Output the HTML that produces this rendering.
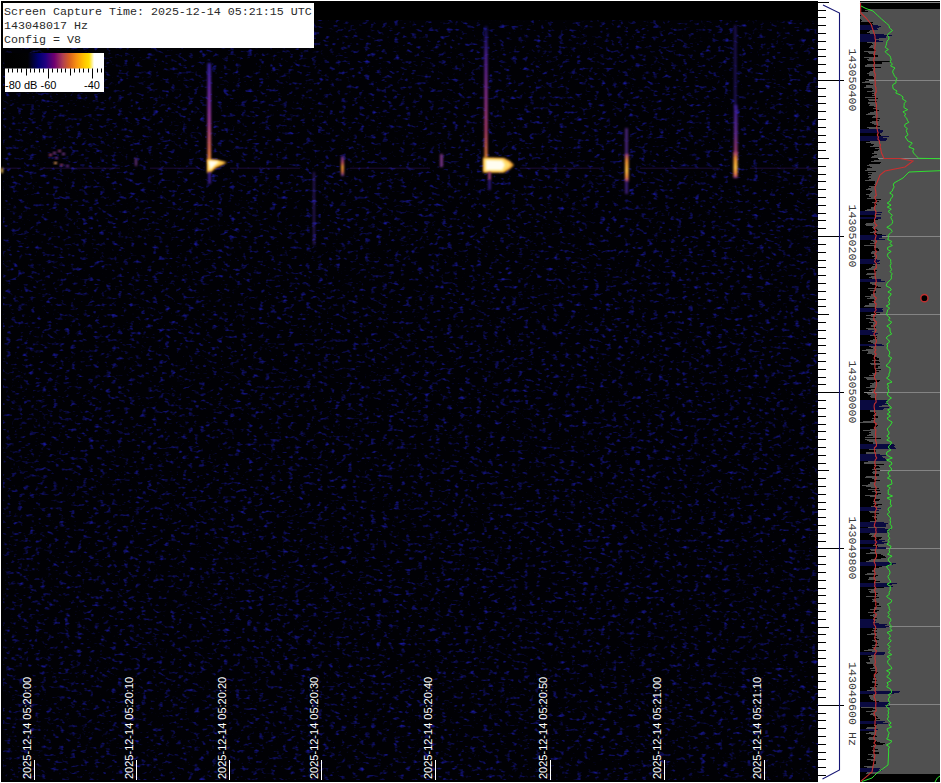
<!DOCTYPE html>
<html><head><meta charset="utf-8"><title>Spectrogram</title>
<style>html,body{margin:0;padding:0;background:#fff;width:941px;height:783px;overflow:hidden}svg{display:block}text{white-space:pre}</style>
</head><body><svg width="941" height="783" viewBox="0 0 941 783">
<defs>
 <filter id="nz" x="3" y="20" width="815" height="760" filterUnits="userSpaceOnUse" color-interpolation-filters="sRGB">
  <feTurbulence type="fractalNoise" baseFrequency="0.17 0.28" numOctaves="2" seed="3" result="t"/>
  <feColorMatrix in="t" type="matrix" values="0 0 0 0 0.1  0 0 0 0 0.1  0 0 0 0 0.66  2.8 0 0 0 -1.62"/>
 </filter>
 <filter id="bl" x="-3" y="-0.5" width="7" height="2" color-interpolation-filters="sRGB"><feGaussianBlur stdDeviation="0.9"/></filter>
 <filter id="bl2" x="-1" y="-1" width="3" height="3" color-interpolation-filters="sRGB"><feGaussianBlur stdDeviation="1.2"/></filter>
 <linearGradient id="cb" x1="0" x2="1" y1="0" y2="0">
  <stop offset="0" stop-color="#000"/>
  <stop offset="0.23" stop-color="#020204"/>
  <stop offset="0.34" stop-color="#000070"/>
  <stop offset="0.41" stop-color="#200080"/>
  <stop offset="0.5" stop-color="#700070"/>
  <stop offset="0.585" stop-color="#b04050"/>
  <stop offset="0.65" stop-color="#d86020"/>
  <stop offset="0.72" stop-color="#f89010"/>
  <stop offset="0.79" stop-color="#ffc000"/>
  <stop offset="0.85" stop-color="#ffe000"/>
  <stop offset="0.9" stop-color="#fff"/>
  <stop offset="1" stop-color="#fff"/>
 </linearGradient>
 <linearGradient id="m1" x1="0" x2="0" y1="0" y2="1">
  <stop offset="0" stop-color="#3020a0"/>
  <stop offset="0.3" stop-color="#6a28a0"/>
  <stop offset="0.6" stop-color="#9a3890"/>
  <stop offset="0.85" stop-color="#d06050"/>
  <stop offset="1" stop-color="#f09030"/>
 </linearGradient>
 <linearGradient id="m2" x1="0" x2="0" y1="0" y2="1">
  <stop offset="0" stop-color="#201890" stop-opacity="0.5"/>
  <stop offset="0.2" stop-color="#4a2098"/>
  <stop offset="0.5" stop-color="#8a3098"/>
  <stop offset="0.8" stop-color="#b84070"/>
  <stop offset="0.95" stop-color="#e07040"/>
  <stop offset="1" stop-color="#f09030"/>
 </linearGradient>
 <linearGradient id="m3" x1="0" x2="0" y1="0" y2="1">
  <stop offset="0" stop-color="#5028a0"/>
  <stop offset="0.35" stop-color="#c05060"/>
  <stop offset="0.55" stop-color="#f0a030"/>
  <stop offset="0.8" stop-color="#e07040"/>
  <stop offset="1" stop-color="#5028a0"/>
 </linearGradient>
 <linearGradient id="m5" x1="0" x2="0" y1="0" y2="1">
  <stop offset="0" stop-color="#a04080"/>
  <stop offset="0.25" stop-color="#f09030"/>
  <stop offset="0.6" stop-color="#ffc040"/>
  <stop offset="0.85" stop-color="#f08040"/>
  <stop offset="1" stop-color="#8030a0"/>
 </linearGradient>
 <linearGradient id="m6" x1="0" x2="0" y1="0" y2="1">
  <stop offset="0" stop-color="#4020a0"/>
  <stop offset="0.6" stop-color="#7030a0"/>
  <stop offset="1" stop-color="#b04070"/>
 </linearGradient>
 <linearGradient id="m4" x1="0" x2="0" y1="0" y2="1">
  <stop offset="0" stop-color="#2a20a0"/>
  <stop offset="0.45" stop-color="#6a2aa0"/>
  <stop offset="0.75" stop-color="#c05050"/>
  <stop offset="0.84" stop-color="#ffc030"/>
  <stop offset="0.95" stop-color="#f09030"/>
  <stop offset="1" stop-color="#6030a0"/>
 </linearGradient>
</defs>
<rect x="1" y="1" width="939" height="781" fill="#000"/>
<rect x="3" y="20" width="815" height="760" fill="#010105"/>
<rect x="3" y="20" width="815" height="760" fill="#fff" filter="url(#nz)"/>
<rect x="3" y="167.5" width="17" height="1.5" fill="#4a2090" opacity="0.25"/>
<rect x="40" y="167.5" width="80" height="1.5" fill="#4a2090" opacity="0.25"/>
<rect x="150" y="167.5" width="50" height="1.5" fill="#4a2090" opacity="0.25"/>
<rect x="230" y="167.5" width="70" height="1.5" fill="#4a2090" opacity="0.25"/>
<rect x="350" y="167.5" width="80" height="1.5" fill="#4a2090" opacity="0.25"/>
<rect x="520" y="167.5" width="80" height="1.5" fill="#4a2090" opacity="0.25"/>
<rect x="640" y="167.5" width="80" height="1.5" fill="#4a2090" opacity="0.25"/>
<rect x="750" y="167.5" width="68" height="1.5" fill="#4a2090" opacity="0.25"/>
<rect x="207.5" y="63" width="3.5" height="99" fill="url(#m1)" opacity="1" filter="url(#bl)"/>
<path d="M207 159 L216 159.5 L227 162.5 L216 168 L210 173 L207 173 Z" fill="#f0a030" filter="url(#bl2)"/>
<path d="M208 160.5 L217 161 L225 162.5 L215 166 L210 171 L208 171 Z" fill="#ffe060" filter="url(#bl)"/>
<path d="M208.5 160.5 L219 161.5 L214 166 L210 170 Z" fill="#fffdf0" filter="url(#bl)"/>
<rect x="208" y="172" width="3" height="12" fill="#4020a0" opacity="0.85" filter="url(#bl)"/>
<rect x="484.5" y="26" width="3" height="132" fill="url(#m2)" opacity="0.95" filter="url(#bl)"/>
<path d="M483 157.5 L504 158 L510 161 L514 165 L510 169 L504 172.5 L483 172.5 Z" fill="#f0a030" filter="url(#bl2)"/>
<path d="M484 158.5 L503 159 L508 162 L511 165 L508 168 L503 171.5 L484 171.5 Z" fill="#ffe070" filter="url(#bl)"/>
<path d="M486 160 L502 160.5 L505 165 L502 170 L486 170 Z" fill="#fffdf0" filter="url(#bl)"/>
<rect x="488" y="172" width="3" height="8" fill="#a04080" opacity="0.9" filter="url(#bl)"/>
<rect x="488" y="180" width="3" height="10" fill="#3a20a0" opacity="0.7" filter="url(#bl)"/>
<rect x="313" y="172" width="2" height="73" fill="#4a2aa0" opacity="0.55" filter="url(#bl)"/>
<rect x="341" y="156" width="3" height="20" fill="url(#m3)" opacity="0.95" filter="url(#bl)"/>
<rect x="440" y="154" width="3" height="13" fill="#9040a0" opacity="0.8" filter="url(#bl)"/>
<rect x="625" y="128" width="3" height="28" fill="#6030a0" opacity="0.7" filter="url(#bl)"/>
<rect x="625" y="154" width="3.5" height="28" fill="url(#m5)" opacity="1" filter="url(#bl)"/>
<rect x="625" y="182" width="3" height="12" fill="#5028a0" opacity="0.7" filter="url(#bl)"/>
<rect x="734" y="25" width="2.5" height="83" fill="#3a20a0" opacity="0.5" filter="url(#bl)"/>
<rect x="734" y="105" width="3.5" height="49" fill="url(#m6)" opacity="0.85" filter="url(#bl)"/>
<rect x="733.5" y="152" width="4" height="26" fill="url(#m5)" opacity="1" filter="url(#bl)"/>
<rect x="135" y="158" width="2" height="8" fill="#8040a0" opacity="0.8" filter="url(#bl)"/>
<rect x="49" y="154" width="3" height="2" fill="#b04080" filter="url(#bl)"/>
<rect x="53" y="152" width="3" height="2" fill="#9040a0" filter="url(#bl)"/>
<rect x="58" y="150" width="3" height="2" fill="#a04090" filter="url(#bl)"/>
<rect x="62" y="153" width="3" height="2" fill="#8040a0" filter="url(#bl)"/>
<rect x="55" y="157" width="3" height="2" fill="#7030a0" filter="url(#bl)"/>
<rect x="54" y="162" width="3" height="2" fill="#f0a040" filter="url(#bl)"/>
<rect x="60" y="164" width="3" height="2" fill="#a04080" filter="url(#bl)"/>
<rect x="66" y="165" width="3" height="2" fill="#7030a0" filter="url(#bl)"/>
<rect x="1" y="168" width="2" height="5" fill="#f0c060" filter="url(#bl)"/>
<rect x="3" y="3" width="311" height="45" fill="#fff"/>
<text x="4" y="15" font-family="Liberation Mono" font-size="11.667" fill="#2a2a2a">Screen Capture Time: 2025-12-14 05:21:15 UTC</text>
<text x="4" y="29" font-family="Liberation Mono" font-size="11.667" fill="#2a2a2a">143048017 Hz</text>
<text x="4" y="43" font-family="Liberation Mono" font-size="11.667" fill="#2a2a2a">Config = V8</text>
<rect x="5" y="53" width="99" height="39" fill="#fff"/>
<rect x="5" y="53" width="99" height="15.5" fill="url(#cb)"/>
<path d="M8.5 68.5v4 M12.5 68.5v4 M17.5 68.5v4 M21.5 68.5v4 M26.5 68.5v7 M30.5 68.5v4 M34.5 68.5v4 M39.5 68.5v4 M43.5 68.5v4 M48.5 68.5v10 M52.5 68.5v4 M57.5 68.5v4 M61.5 68.5v4 M65.5 68.5v4 M70.5 68.5v7 M74.5 68.5v4 M79.5 68.5v4 M83.5 68.5v4 M88.5 68.5v4 M92.5 68.5v10 M97.5 68.5v4 M101.5 68.5v4" stroke="#000" stroke-width="1"/>
<text x="5" y="89" font-family="Liberation Sans" font-size="11" fill="#000">-80 dB -60</text>
<text x="84" y="89" font-family="Liberation Sans" font-size="11" fill="#000">-40</text>
<rect x="34" y="760" width="1" height="20" fill="#fff"/>
<text transform="translate(30.5 779) rotate(-90)" font-family="Liberation Sans" font-size="11" fill="#fff">2025-12-14 05:20:00</text>
<rect x="136" y="760" width="1" height="20" fill="#fff"/>
<text transform="translate(132.5 779) rotate(-90)" font-family="Liberation Sans" font-size="11" fill="#fff">2025-12-14 05:20:10</text>
<rect x="229" y="760" width="1" height="20" fill="#fff"/>
<text transform="translate(225.5 779) rotate(-90)" font-family="Liberation Sans" font-size="11" fill="#fff">2025-12-14 05:20:20</text>
<rect x="321" y="760" width="1" height="20" fill="#fff"/>
<text transform="translate(317.5 779) rotate(-90)" font-family="Liberation Sans" font-size="11" fill="#fff">2025-12-14 05:20:30</text>
<rect x="435" y="760" width="1" height="20" fill="#fff"/>
<text transform="translate(431.5 779) rotate(-90)" font-family="Liberation Sans" font-size="11" fill="#fff">2025-12-14 05:20:40</text>
<rect x="550" y="760" width="1" height="20" fill="#fff"/>
<text transform="translate(546.5 779) rotate(-90)" font-family="Liberation Sans" font-size="11" fill="#fff">2025-12-14 05:20:50</text>
<rect x="664" y="760" width="1" height="20" fill="#fff"/>
<text transform="translate(660.5 779) rotate(-90)" font-family="Liberation Sans" font-size="11" fill="#fff">2025-12-14 05:21:00</text>
<rect x="764" y="760" width="1" height="20" fill="#fff"/>
<text transform="translate(760.5 779) rotate(-90)" font-family="Liberation Sans" font-size="11" fill="#fff">2025-12-14 05:21:10</text>
<rect x="818" y="0" width="42" height="783" fill="#fff"/>
<path d="M818 2.5h11 M818 10.5h8 M818 17.5h8 M818 25.5h8 M818 33.5h8 M818 41.5h8 M818 49.5h8 M818 56.5h8 M818 64.5h8 M818 72.5h8 M818 80.5h26 M818 88.5h8 M818 96.5h8 M818 103.5h8 M818 111.5h8 M818 119.5h8 M818 127.5h8 M818 135.5h8 M818 142.5h8 M818 150.5h8 M818 158.5h11 M818 166.5h8 M818 174.5h8 M818 181.5h8 M818 189.5h8 M818 197.5h8 M818 205.5h8 M818 213.5h8 M818 220.5h8 M818 228.5h8 M818 236.5h26 M818 244.5h8 M818 252.5h8 M818 260.5h8 M818 267.5h8 M818 275.5h8 M818 283.5h8 M818 291.5h8 M818 299.5h8 M818 306.5h8 M818 314.5h11 M818 322.5h8 M818 330.5h8 M818 338.5h8 M818 345.5h8 M818 353.5h8 M818 361.5h8 M818 369.5h8 M818 377.5h8 M818 384.5h8 M818 392.5h26 M818 400.5h8 M818 408.5h8 M818 416.5h8 M818 424.5h8 M818 431.5h8 M818 439.5h8 M818 447.5h8 M818 455.5h8 M818 463.5h8 M818 470.5h11 M818 478.5h8 M818 486.5h8 M818 494.5h8 M818 502.5h8 M818 509.5h8 M818 517.5h8 M818 525.5h8 M818 533.5h8 M818 541.5h8 M818 548.5h26 M818 556.5h8 M818 564.5h8 M818 572.5h8 M818 580.5h8 M818 588.5h8 M818 595.5h8 M818 603.5h8 M818 611.5h8 M818 619.5h8 M818 627.5h11 M818 634.5h8 M818 642.5h8 M818 650.5h8 M818 658.5h8 M818 666.5h8 M818 673.5h8 M818 681.5h8 M818 689.5h8 M818 697.5h8 M818 705.5h26 M818 713.5h8 M818 720.5h8 M818 728.5h8 M818 736.5h8 M818 744.5h8 M818 752.5h8 M818 759.5h8 M818 767.5h8 M818 775.5h8" stroke="#000" stroke-width="1"/>
<path d="M823 5 L839.5 13 L839.5 770 L822.5 779" fill="none" stroke="#161674" stroke-width="1.1"/>
<text transform="translate(849 80) rotate(90)" font-family="Liberation Mono" font-size="11.667" fill="#3a3a3a" text-anchor="middle">143050400</text>
<text transform="translate(849 236) rotate(90)" font-family="Liberation Mono" font-size="11.667" fill="#3a3a3a" text-anchor="middle">143050200</text>
<text transform="translate(849 392) rotate(90)" font-family="Liberation Mono" font-size="11.667" fill="#3a3a3a" text-anchor="middle">143050000</text>
<text transform="translate(849 548) rotate(90)" font-family="Liberation Mono" font-size="11.667" fill="#3a3a3a" text-anchor="middle">143049800</text>
<text transform="translate(849 704) rotate(90)" font-family="Liberation Mono" font-size="11.667" fill="#3a3a3a" text-anchor="middle">143049600 Hz</text>
<rect x="860" y="1" width="80" height="781" fill="#000"/>
<rect x="860" y="2" width="80" height="1" fill="#888"/>
<rect x="860" y="9" width="80" height="765" fill="#505050"/>
<rect x="860" y="80" width="80" height="1" fill="#848484"/>
<rect x="860" y="158" width="80" height="1" fill="#848484"/>
<rect x="860" y="236" width="80" height="1" fill="#848484"/>
<rect x="860" y="314" width="80" height="1" fill="#848484"/>
<rect x="860" y="392" width="80" height="1" fill="#848484"/>
<rect x="860" y="470" width="80" height="1" fill="#848484"/>
<rect x="860" y="548" width="80" height="1" fill="#848484"/>
<rect x="860" y="626" width="80" height="1" fill="#848484"/>
<rect x="860" y="704" width="80" height="1" fill="#848484"/>
<path d="M860 9.5h9 M860 10.5h5 M860 11.5h8 M860 12.5h0 M860 13.5h0 M860 14.5h0 M860 15.5h1 M860 16.5h0 M860 17.5h0 M860 18.5h0 M860 19.5h1 M860 20.5h2 M860 21.5h1 M860 22.5h13 M860 23.5h12 M860 24.5h13 M860 30.5h10 M860 31.5h9 M860 32.5h7 M860 33.5h10 M860 42.5h7 M860 43.5h12 M860 44.5h13 M860 45.5h11 M860 46.5h10 M860 47.5h9 M860 48.5h13 M860 49.5h15 M860 50.5h16 M860 51.5h4 M860 52.5h8 M860 53.5h9 M860 54.5h13 M860 55.5h18 M860 56.5h18 M860 57.5h4 M860 58.5h9 M860 59.5h7 M860 60.5h8 M860 61.5h30 M860 62.5h22 M860 63.5h22 M860 64.5h7 M860 65.5h5 M860 66.5h5 M860 67.5h21 M860 68.5h12 M860 69.5h13 M860 70.5h13 M860 71.5h10 M860 72.5h9 M860 73.5h7 M860 74.5h9 M860 75.5h9 M860 76.5h13 M860 77.5h14 M860 78.5h14 M860 79.5h6 M860 80.5h9 M860 81.5h5 M860 82.5h2 M860 83.5h10 M860 84.5h13 M860 85.5h6 M860 86.5h6 M860 87.5h4 M860 88.5h12 M860 89.5h13 M860 90.5h12 M860 91.5h7 M860 92.5h14 M860 93.5h12 M860 94.5h14 M860 95.5h12 M860 96.5h15 M860 97.5h5 M860 98.5h18 M860 99.5h8 M860 100.5h9 M860 101.5h17 M860 102.5h8 M860 103.5h8 M860 104.5h10 M860 105.5h9 M860 106.5h14 M860 107.5h16 M860 108.5h13 M860 109.5h16 M860 110.5h19 M860 111.5h14 M860 112.5h10 M860 113.5h8 M860 114.5h6 M860 115.5h15 M860 116.5h13 M860 117.5h12 M860 118.5h20 M860 119.5h17 M860 120.5h19 M860 121.5h12 M860 122.5h10 M860 123.5h12 M860 124.5h14 M860 125.5h18 M860 126.5h20 M860 127.5h7 M860 128.5h9 M860 133.5h20 M860 134.5h20 M860 135.5h21 M860 141.5h10 M860 142.5h6 M860 143.5h11 M860 144.5h14 M860 145.5h13 M860 146.5h10 M860 147.5h19 M860 148.5h15 M860 149.5h19 M860 150.5h18 M860 151.5h14 M860 152.5h14 M860 153.5h12 M860 154.5h17 M860 155.5h14 M860 156.5h12 M860 157.5h11 M860 158.5h18 M860 159.5h19 M860 160.5h14 M860 161.5h11 M860 162.5h21 M860 163.5h20 M860 164.5h9 M860 165.5h7 M860 166.5h10 M860 167.5h12 M860 168.5h7 M860 169.5h7 M860 170.5h5 M860 171.5h16 M860 172.5h8 M860 173.5h12 M860 174.5h8 M860 175.5h11 M860 176.5h9 M860 177.5h8 M860 178.5h11 M860 179.5h9 M860 180.5h5 M860 181.5h15 M860 182.5h15 M860 183.5h15 M860 184.5h14 M860 185.5h15 M860 186.5h9 M860 187.5h11 M860 188.5h8 M860 189.5h6 M860 190.5h10 M860 191.5h12 M860 192.5h11 M860 193.5h10 M860 194.5h6 M860 195.5h9 M860 196.5h9 M860 197.5h11 M860 198.5h7 M860 199.5h21 M860 200.5h17 M860 201.5h19 M860 202.5h12 M860 203.5h16 M860 204.5h17 M860 205.5h15 M860 206.5h14 M860 207.5h11 M860 208.5h11 M860 209.5h7 M860 210.5h5 M860 215.5h15 M860 216.5h16 M860 219.5h18 M860 220.5h14 M860 221.5h14 M860 222.5h13 M860 223.5h6 M860 224.5h5 M860 225.5h6 M860 226.5h13 M860 227.5h12 M860 228.5h13 M860 229.5h17 M860 230.5h18 M860 231.5h13 M860 232.5h10 M860 233.5h17 M860 234.5h22 M860 240.5h11 M860 241.5h13 M860 242.5h14 M860 243.5h10 M860 244.5h16 M860 245.5h4 M860 246.5h14 M860 247.5h14 M860 248.5h18 M860 249.5h19 M860 250.5h19 M860 251.5h12 M860 252.5h11 M860 253.5h11 M860 254.5h14 M860 255.5h14 M860 256.5h12 M860 257.5h15 M860 258.5h14 M860 264.5h13 M860 265.5h15 M860 266.5h12 M860 267.5h11 M860 268.5h9 M860 269.5h6 M860 270.5h17 M860 271.5h16 M860 272.5h16 M860 273.5h7 M860 274.5h6 M860 275.5h15 M860 276.5h11 M860 277.5h9 M860 278.5h12 M860 282.5h10 M860 283.5h10 M860 284.5h12 M860 285.5h16 M860 286.5h18 M860 287.5h21 M860 288.5h8 M860 289.5h15 M860 290.5h10 M860 291.5h16 M860 292.5h16 M860 293.5h13 M860 294.5h11 M860 295.5h11 M860 296.5h5 M860 297.5h10 M860 298.5h7 M860 299.5h14 M860 300.5h15 M860 301.5h12 M860 302.5h14 M860 303.5h9 M860 304.5h9 M860 305.5h5 M860 306.5h4 M860 307.5h15 M860 312.5h16 M860 313.5h20 M860 314.5h11 M860 315.5h6 M860 316.5h11 M860 317.5h16 M860 318.5h6 M860 319.5h10 M860 320.5h11 M860 321.5h14 M860 322.5h9 M860 323.5h13 M860 324.5h13 M860 325.5h11 M860 326.5h11 M860 327.5h16 M860 328.5h6 M860 329.5h8 M860 335.5h10 M860 336.5h17 M860 337.5h16 M860 338.5h17 M860 339.5h13 M860 340.5h10 M860 341.5h8 M860 342.5h11 M860 343.5h13 M860 346.5h9 M860 347.5h11 M860 348.5h13 M860 349.5h6 M860 350.5h2 M860 351.5h8 M860 352.5h8 M860 353.5h7 M860 354.5h12 M860 355.5h14 M860 356.5h14 M860 357.5h17 M860 358.5h19 M860 359.5h19 M860 360.5h12 M860 361.5h19 M860 362.5h20 M860 363.5h10 M860 364.5h11 M860 365.5h20 M860 366.5h18 M860 367.5h18 M860 368.5h15 M860 369.5h21 M860 370.5h16 M860 371.5h19 M860 372.5h15 M860 373.5h12 M860 374.5h13 M860 375.5h9 M860 376.5h14 M860 377.5h4 M860 378.5h6 M860 379.5h7 M860 380.5h20 M860 381.5h19 M860 382.5h14 M860 383.5h10 M860 384.5h12 M860 385.5h10 M860 386.5h10 M860 387.5h6 M860 388.5h15 M860 389.5h11 M860 390.5h9 M860 391.5h12 M860 392.5h4 M860 393.5h7 M860 394.5h8 M860 395.5h11 M860 396.5h10 M860 397.5h11 M860 398.5h15 M860 399.5h15 M860 410.5h10 M860 411.5h10 M860 412.5h16 M860 413.5h15 M860 414.5h14 M860 415.5h13 M860 416.5h18 M860 417.5h18 M860 418.5h12 M860 419.5h14 M860 420.5h11 M860 421.5h3 M860 422.5h0 M860 423.5h16 M860 424.5h15 M860 425.5h18 M860 426.5h17 M860 427.5h15 M860 428.5h15 M860 429.5h10 M860 430.5h3 M860 431.5h11 M860 432.5h9 M860 433.5h11 M860 434.5h9 M860 435.5h7 M860 436.5h13 M860 437.5h5 M860 438.5h21 M860 439.5h5 M860 440.5h7 M860 441.5h9 M860 442.5h13 M860 443.5h13 M860 449.5h9 M860 450.5h16 M860 451.5h16 M860 452.5h6 M860 453.5h6 M860 461.5h8 M860 462.5h4 M860 463.5h4 M860 464.5h24 M860 465.5h14 M860 466.5h19 M860 467.5h20 M860 468.5h16 M860 469.5h12 M860 470.5h20 M860 471.5h13 M860 472.5h12 M860 473.5h13 M860 474.5h19 M860 475.5h19 M860 476.5h6 M860 477.5h5 M860 478.5h12 M860 479.5h14 M860 480.5h20 M860 481.5h16 M860 482.5h10 M860 483.5h10 M860 484.5h8 M860 485.5h2 M860 486.5h6 M860 487.5h11 M860 488.5h19 M860 489.5h8 M860 490.5h20 M860 491.5h12 M860 492.5h15 M860 493.5h21 M860 494.5h18 M860 495.5h5 M860 496.5h10 M860 497.5h15 M860 498.5h15 M860 499.5h20 M860 500.5h19 M860 501.5h13 M860 502.5h15 M860 503.5h13 M860 504.5h22 M860 505.5h18 M860 506.5h11 M860 511.5h9 M860 512.5h10 M860 513.5h19 M860 514.5h16 M860 515.5h17 M860 516.5h12 M860 517.5h14 M860 518.5h17 M860 519.5h17 M860 520.5h16 M860 521.5h10 M860 527.5h8 M860 533.5h10 M860 534.5h9 M860 535.5h12 M860 536.5h11 M860 537.5h22 M860 538.5h21 M860 539.5h19 M860 544.5h17 M860 545.5h13 M860 546.5h18 M860 549.5h10 M860 550.5h11 M860 551.5h16 M860 552.5h10 M860 553.5h6 M860 554.5h21 M860 555.5h23 M860 556.5h25 M860 557.5h26 M860 558.5h21 M860 559.5h11 M860 560.5h9 M860 561.5h6 M860 566.5h22 M860 567.5h19 M860 568.5h14 M860 569.5h14 M860 570.5h12 M860 571.5h12 M860 572.5h15 M860 573.5h7 M860 574.5h5 M860 575.5h18 M860 576.5h16 M860 577.5h9 M860 578.5h9 M860 579.5h8 M860 580.5h16 M860 581.5h20 M860 582.5h15 M860 587.5h24 M860 588.5h14 M860 589.5h8 M860 590.5h11 M860 591.5h9 M860 592.5h10 M860 593.5h18 M860 594.5h15 M860 595.5h17 M860 596.5h6 M860 597.5h19 M860 598.5h16 M860 599.5h12 M860 600.5h13 M860 601.5h12 M860 602.5h17 M860 603.5h19 M860 604.5h19 M860 605.5h17 M860 606.5h21 M860 607.5h14 M860 608.5h14 M860 609.5h10 M860 610.5h19 M860 611.5h17 M860 612.5h8 M860 613.5h16 M860 614.5h13 M860 615.5h10 M860 616.5h13 M860 617.5h14 M860 618.5h17 M860 628.5h13 M860 629.5h17 M860 630.5h12 M860 631.5h15 M860 632.5h17 M860 633.5h11 M860 634.5h7 M860 635.5h16 M860 636.5h17 M860 637.5h14 M860 638.5h17 M860 639.5h19 M860 640.5h12 M860 641.5h14 M860 642.5h17 M860 643.5h18 M860 644.5h15 M860 645.5h12 M860 646.5h19 M860 647.5h12 M860 648.5h15 M860 649.5h8 M860 650.5h4 M860 651.5h12 M860 655.5h11 M860 656.5h8 M860 657.5h12 M860 658.5h9 M860 659.5h9 M860 660.5h10 M860 661.5h10 M860 662.5h6 M860 663.5h7 M860 664.5h13 M860 665.5h13 M860 666.5h14 M860 667.5h13 M860 668.5h10 M860 669.5h15 M860 670.5h11 M860 671.5h16 M860 672.5h18 M860 673.5h17 M860 674.5h15 M860 675.5h14 M860 676.5h14 M860 677.5h16 M860 678.5h13 M860 679.5h13 M860 680.5h17 M860 681.5h12 M860 682.5h12 M860 683.5h15 M860 684.5h18 M860 685.5h15 M860 686.5h17 M860 687.5h10 M860 688.5h12 M860 689.5h11 M860 690.5h7 M860 694.5h13 M860 695.5h9 M860 696.5h9 M860 697.5h10 M860 698.5h10 M860 699.5h11 M860 700.5h13 M860 701.5h19 M860 707.5h1 M860 708.5h13 M860 709.5h16 M860 710.5h12 M860 711.5h6 M860 712.5h15 M860 713.5h11 M860 714.5h10 M860 715.5h13 M860 716.5h17 M860 717.5h18 M860 718.5h16 M860 719.5h20 M860 720.5h16 M860 724.5h17 M860 725.5h14 M860 726.5h15 M860 727.5h7 M860 728.5h6 M860 731.5h14 M860 732.5h9 M860 733.5h6 M860 734.5h11 M860 735.5h16 M860 736.5h17 M860 737.5h9 M860 738.5h8 M860 739.5h9 M860 740.5h15 M860 741.5h17 M860 742.5h20 M860 743.5h25 M860 744.5h23 M860 745.5h13 M860 746.5h11 M860 747.5h15 M860 748.5h15 M860 749.5h18 M860 750.5h12 M860 751.5h13 M860 752.5h19 M860 753.5h19 M860 754.5h8 M860 755.5h12 M860 756.5h11 M860 757.5h13 M860 758.5h14 M860 759.5h7 M860 760.5h11 M860 761.5h16 M860 762.5h16 M860 763.5h16 M860 764.5h14 M860 765.5h13 M860 766.5h4 M860 767.5h7 M860 772.5h7 M860 773.5h6" stroke="#000" stroke-width="1"/>
<path d="M860 25.5h18 M860 26.5h21 M860 27.5h19 M860 28.5h17 M860 29.5h18 M860 34.5h24 M860 35.5h32 M860 36.5h26 M860 37.5h26 M860 38.5h19 M860 39.5h16 M860 40.5h19 M860 41.5h23 M860 129.5h20 M860 130.5h23 M860 131.5h23 M860 132.5h22 M860 136.5h29 M860 137.5h23 M860 138.5h27 M860 139.5h27 M860 140.5h26 M860 211.5h15 M860 212.5h22 M860 213.5h15 M860 214.5h21 M860 217.5h21 M860 218.5h21 M860 235.5h26 M860 236.5h22 M860 237.5h22 M860 238.5h19 M860 239.5h25 M860 259.5h17 M860 260.5h20 M860 261.5h19 M860 262.5h17 M860 263.5h20 M860 279.5h21 M860 280.5h21 M860 281.5h25 M860 308.5h23 M860 309.5h22 M860 310.5h23 M860 311.5h23 M860 330.5h14 M860 331.5h12 M860 332.5h15 M860 333.5h18 M860 334.5h16 M860 344.5h22 M860 345.5h24 M860 400.5h28 M860 401.5h26 M860 402.5h28 M860 403.5h25 M860 404.5h29 M860 405.5h22 M860 406.5h19 M860 407.5h29 M860 408.5h24 M860 409.5h23 M860 444.5h34 M860 445.5h35 M860 446.5h34 M860 447.5h35 M860 448.5h36 M860 454.5h20 M860 455.5h26 M860 456.5h22 M860 457.5h23 M860 458.5h25 M860 459.5h26 M860 460.5h27 M860 507.5h17 M860 508.5h21 M860 509.5h16 M860 510.5h19 M860 522.5h24 M860 523.5h28 M860 524.5h26 M860 525.5h26 M860 526.5h26 M860 528.5h25 M860 529.5h31 M860 530.5h27 M860 531.5h29 M860 532.5h27 M860 540.5h25 M860 541.5h22 M860 542.5h27 M860 543.5h24 M860 547.5h26 M860 548.5h26 M860 562.5h29 M860 563.5h36 M860 564.5h33 M860 565.5h30 M860 583.5h37 M860 584.5h32 M860 585.5h28 M860 586.5h33 M860 619.5h13 M860 620.5h15 M860 621.5h16 M860 622.5h13 M860 623.5h19 M860 624.5h27 M860 625.5h25 M860 626.5h29 M860 627.5h26 M860 652.5h25 M860 653.5h25 M860 654.5h24 M860 691.5h40 M860 692.5h39 M860 693.5h34 M860 702.5h30 M860 703.5h28 M860 704.5h29 M860 705.5h25 M860 706.5h30 M860 721.5h25 M860 722.5h23 M860 723.5h28 M860 729.5h18 M860 730.5h14 M860 768.5h20 M860 769.5h19 M860 770.5h22 M860 771.5h19" stroke="#0a0a40" stroke-width="1"/>
<polyline points="860.5,3.0 860.6,5.0 860.6,7.0 860.7,9.0 860.7,11.0 860.8,13.0 863.4,15.5 866.0,18.0 867.7,20.0 869.3,22.0 871.0,24.0 871.7,26.0 872.3,28.0 873.0,30.0 873.7,32.0 874.3,34.0 875.0,36.0 875.0,38.1 875.6,40.3 875.2,42.4 875.3,44.6 874.9,46.7 874.7,48.9 875.2,51.0 874.3,53.0 874.2,55.0 874.7,57.0 873.9,59.0 873.7,61.0 874.6,63.0 873.7,65.1 874.3,67.2 874.7,69.2 873.9,71.2 875.0,73.3 875.3,75.3 875.0,77.4 874.9,79.5 875.2,81.5 875.3,83.5 875.1,85.6 875.9,87.7 875.9,89.7 876.2,91.8 875.1,93.8 875.4,95.8 875.5,97.9 875.7,99.9 875.7,102.0 876.3,104.1 876.6,106.1 876.0,108.2 876.7,110.2 876.7,112.3 877.0,114.4 877.0,116.4 876.8,118.5 876.8,120.6 876.9,122.6 877.5,124.7 876.6,126.8 877.1,128.8 877.5,130.9 878.2,132.9 877.3,135.0 878.4,137.0 877.9,139.0 879.5,141.0 879.4,143.0 880.5,145.0 879.9,147.0 880.8,149.0 881.1,151.0 881.5,153.0 882.8,155.8 884.0,158.5 900.0,158.5 913.0,161.0 905.0,167.0 885.0,171.0 880.0,175.0 876.0,185.0 875.0,187.0 875.1,189.0 875.8,191.1 875.8,193.1 876.4,195.1 874.7,197.1 875.3,199.1 876.6,201.1 874.8,203.2 875.4,205.2 874.6,207.2 874.6,209.2 875.9,211.2 876.0,213.2 875.2,215.3 875.6,217.3 874.5,219.3 874.7,221.3 874.9,223.3 876.9,225.4 874.5,227.4 874.6,229.4 876.1,231.4 874.4,233.4 876.2,235.4 875.6,237.5 875.0,239.5 876.6,241.5 875.1,243.5 875.3,245.5 875.2,247.5 875.0,249.6 876.6,251.6 874.9,253.6 876.3,255.6 876.3,257.6 875.4,259.6 874.6,261.7 876.4,263.7 876.1,265.7 876.4,267.7 874.2,269.7 875.1,271.8 875.2,273.8 875.0,275.8 875.5,277.8 876.0,279.8 876.3,281.8 875.1,283.9 876.3,285.9 875.3,287.9 874.9,289.9 873.8,291.9 874.0,293.9 874.2,296.0 876.3,298.0 875.3,300.0 874.2,302.0 876.2,304.0 875.8,306.0 875.2,308.0 876.2,310.0 874.4,312.0 875.8,314.0 873.8,316.0 873.9,318.0 873.9,320.0 876.3,322.0 876.2,324.0 874.3,326.0 874.4,328.0 876.1,330.0 875.2,332.0 873.8,334.0 875.0,336.0 875.4,338.0 876.1,340.0 876.4,342.0 875.1,344.0 875.9,346.0 874.5,348.0 875.9,350.0 874.5,352.0 876.1,354.0 874.9,356.0 874.1,358.0 875.3,360.0 874.5,362.0 875.3,364.0 874.9,366.0 874.9,368.0 875.8,370.0 875.8,372.0 875.5,374.0 874.4,376.0 874.5,378.0 875.8,380.0 876.5,382.0 876.2,384.0 876.3,386.0 875.6,388.0 874.8,390.0 874.0,392.0 876.1,394.0 875.8,396.0 875.4,398.0 875.9,400.0 876.2,402.0 874.5,404.0 874.1,406.0 874.2,408.0 874.7,410.0 874.5,412.0 875.7,414.0 874.5,416.0 875.1,418.0 874.5,420.0 874.1,422.0 876.3,424.0 875.6,426.0 874.3,428.0 875.9,430.0 875.7,432.0 875.5,434.0 875.8,436.0 875.8,438.0 875.4,440.0 876.1,442.0 876.5,444.0 876.4,446.0 874.3,448.0 874.7,450.0 874.7,452.0 875.7,454.0 875.6,456.0 876.7,458.0 875.3,460.0 874.7,462.0 874.9,464.0 875.7,466.0 874.3,468.0 875.7,470.0 876.0,472.0 875.6,474.0 875.2,476.0 876.3,478.0 875.0,480.0 875.3,482.0 874.4,484.0 875.2,486.0 876.4,488.0 875.0,490.0 876.7,492.0 876.1,494.0 875.3,496.0 875.5,498.0 874.3,500.0 874.8,502.0 875.9,504.0 874.4,506.0 876.7,508.0 876.0,510.0 875.1,512.0 875.1,514.1 875.4,516.1 874.8,518.1 875.9,520.1 875.2,522.1 874.6,524.1 874.2,526.1 876.1,528.1 875.7,530.1 876.2,532.1 875.5,534.1 874.2,536.1 876.1,538.1 875.0,540.2 876.6,542.2 875.0,544.2 876.5,546.2 876.2,548.2 875.4,550.2 875.4,552.2 876.4,554.2 876.6,556.2 875.8,558.2 874.3,560.2 874.2,562.2 875.3,564.3 875.5,566.3 875.2,568.3 874.1,570.3 874.8,572.3 875.2,574.3 874.2,576.3 874.1,578.3 875.5,580.3 874.5,582.3 875.0,584.3 874.6,586.3 875.9,588.3 874.4,590.4 875.5,592.4 875.4,594.4 875.4,596.4 875.0,598.4 875.1,600.4 876.0,602.4 875.6,604.4 876.2,606.4 875.6,608.4 874.5,610.4 874.0,612.4 876.3,614.4 875.6,616.5 874.0,618.5 874.5,620.5 874.0,622.5 874.1,624.5 875.5,626.5 875.7,628.5 874.7,630.5 874.8,632.5 875.6,634.5 874.9,636.5 874.8,638.5 876.0,640.6 876.3,642.6 876.1,644.6 875.7,646.6 874.0,648.6 876.3,650.6 876.0,652.6 874.6,654.6 875.2,656.6 874.8,658.6 875.3,660.6 875.4,662.6 874.7,664.6 875.6,666.7 876.3,668.7 875.9,670.7 876.2,672.7 874.3,674.7 874.3,676.7 875.4,678.7 875.8,680.7 875.1,682.7 875.4,684.7 874.7,686.7 875.8,688.7 874.7,690.7 876.0,692.8 875.1,694.8 874.0,696.8 875.1,698.8 875.5,700.8 876.0,702.8 875.7,704.8 875.8,706.8 875.6,708.8 876.2,710.8 873.8,712.8 874.6,714.8 875.3,716.9 875.8,718.9 875.0,720.9 875.1,722.9 874.8,724.9 875.8,726.9 874.8,728.9 876.1,730.9 875.3,732.9 875.2,734.9 873.8,736.9 874.1,738.9 875.5,740.9 873.9,743.0 875.7,745.0 874.3,747.0 873.8,749.0 874.4,751.0 873.7,753.0 875.0,755.0 874.6,757.1 874.2,759.2 873.9,761.4 873.5,763.5 873.1,765.6 872.8,767.8 872.4,769.9 872.0,772.0 869.1,774.4 866.2,776.8 863.4,779.1 860.5,781.5" fill="none" stroke="#c83030" stroke-width="1.1"/>
<circle cx="924.4" cy="298.2" r="3.6" fill="#000" stroke="#c03030" stroke-width="1.5"/>
<polyline points="861.0,6.0 866.0,8.5 873.0,11.0 875.1,13.0 877.2,15.0 879.4,17.0 881.5,19.0 884.0,21.2 886.5,23.3 889.0,25.5 889.5,28.0 892.5,30.5 889.3,33.0 887.2,35.1 888.9,37.1 888.8,39.2 887.0,41.2 886.6,43.3 886.1,45.4 885.3,47.4 888.4,49.5 885.1,51.5 886.9,53.6 889.8,55.6 890.7,57.7 891.2,59.8 890.0,61.8 892.5,63.9 890.6,65.9 895.0,68.0 893.2,70.0 892.6,72.1 893.7,74.2 894.5,76.3 897.0,78.4 895.8,80.6 896.1,82.7 892.7,84.8 892.8,86.9 893.3,89.0 897.1,91.0 895.7,93.0 900.5,95.0 903.1,97.0 902.5,99.1 906.2,101.2 904.3,103.3 904.1,105.4 903.9,107.6 907.7,109.7 902.9,111.8 905.7,113.9 904.4,116.0 906.7,118.1 907.3,120.2 908.8,122.3 904.9,124.4 904.6,126.5 907.3,128.5 906.3,130.6 907.0,132.7 908.0,134.8 905.1,136.9 906.7,139.0 907.9,141.0 912.3,143.0 910.5,145.0 908.8,147.0 914.1,149.0 912.7,151.0 913.5,153.0 916.0,155.7 918.6,158.3 940.0,158.7" fill="none" stroke="#30e030" stroke-width="1"/>
<polyline points="940.0,170.7 909.0,172.0 907.0,174.0 905.0,176.0 903.0,178.0 898.5,180.5 894.0,183.0 893.2,185.0 894.2,187.0 892.9,189.0 892.3,191.0 889.7,193.0 892.9,195.0 892.3,197.0 890.5,199.1 890.2,201.1 887.2,203.1 891.1,205.1 887.3,207.1 891.3,209.2 888.3,211.2 889.8,213.2 892.4,215.2 890.7,217.2 891.6,219.2 892.7,221.3 892.2,223.3 890.4,225.3 886.8,227.3 891.0,229.3 892.2,231.4 890.2,233.4 888.1,235.4 888.5,237.4 887.6,239.4 891.9,241.5 889.7,243.5 892.4,245.5 887.6,247.5 887.6,249.5 891.2,251.5 887.8,253.6 887.4,255.6 888.5,257.6 890.7,259.6 890.7,261.6 891.1,263.7 890.1,265.7 890.7,267.7 891.6,269.7 890.1,271.7 892.2,273.8 891.1,275.8 891.6,277.8 890.6,279.8 888.1,281.8 886.8,283.8 886.2,285.9 890.2,287.9 891.3,289.9 887.9,291.9 891.3,293.9 890.0,296.0 888.3,298.0 889.9,300.0 888.5,302.0 889.9,304.0 886.2,306.0 889.6,308.0 887.6,310.0 887.2,312.0 886.5,314.0 887.6,316.0 890.2,318.0 888.3,320.0 891.7,322.0 890.1,324.0 886.8,326.0 889.9,328.0 890.0,330.0 890.2,332.0 891.7,334.0 888.0,336.0 886.1,338.0 888.6,340.0 889.6,342.0 886.8,344.0 887.6,346.0 886.8,348.0 888.3,350.0 889.8,352.0 889.5,354.0 888.5,356.0 891.8,358.0 890.0,360.0 889.8,362.0 887.4,364.0 886.2,366.0 890.1,368.0 890.0,370.0 889.9,372.0 888.9,374.0 889.1,376.0 886.5,378.0 889.5,380.0 892.0,382.0 887.0,384.0 888.5,386.0 887.6,388.0 888.8,390.0 888.5,392.0 887.2,394.0 888.4,396.0 891.5,398.0 888.4,400.0 886.7,402.0 887.9,404.0 890.0,406.0 891.6,408.0 887.7,410.0 890.2,412.0 887.2,414.0 890.6,416.0 887.1,418.0 888.4,420.0 892.2,422.0 891.1,424.0 889.9,426.0 887.7,428.0 887.4,430.0 889.0,432.0 889.0,434.0 886.8,436.0 889.5,438.0 886.8,440.0 891.3,442.0 891.1,444.0 888.8,446.0 888.6,448.0 890.9,450.0 887.0,452.0 886.4,454.0 888.2,456.0 892.3,458.0 886.6,460.0 891.2,462.0 892.0,464.0 889.0,466.0 891.2,468.0 891.5,470.0 888.2,472.0 888.2,474.0 890.4,476.0 887.4,478.0 891.3,480.0 891.7,482.0 892.0,484.0 887.1,486.0 890.4,488.0 888.1,490.0 888.3,492.0 888.0,494.0 892.5,496.0 887.1,498.0 890.9,500.0 890.4,502.0 890.3,504.0 891.7,506.0 888.5,508.0 888.0,510.0 889.8,512.0 887.2,514.1 889.0,516.1 890.6,518.1 890.0,520.1 890.5,522.1 889.9,524.1 891.7,526.1 891.8,528.1 888.1,530.1 887.8,532.1 889.3,534.1 888.0,536.1 889.9,538.2 888.0,540.2 889.4,542.2 886.9,544.2 891.1,546.2 890.3,548.2 889.0,550.2 889.9,552.2 887.6,554.2 892.1,556.2 888.7,558.2 888.0,560.2 890.4,562.3 891.5,564.3 886.5,566.3 887.5,568.3 889.4,570.3 890.0,572.3 889.6,574.3 887.9,576.3 888.6,578.3 890.0,580.3 890.7,582.3 887.0,584.3 890.4,586.4 890.1,588.4 890.2,590.4 889.1,592.4 889.3,594.4 886.5,596.4 888.9,598.4 891.8,600.4 891.1,602.4 887.4,604.4 889.1,606.4 889.1,608.4 890.3,610.5 887.9,612.5 889.6,614.5 887.7,616.5 890.6,618.5 890.9,620.5 889.5,622.5 890.0,624.5 891.7,626.5 890.2,628.5 892.0,630.5 887.0,632.5 889.8,634.5 890.3,636.6 888.7,638.6 891.3,640.6 889.5,642.6 887.4,644.6 890.2,646.6 888.3,648.6 890.1,650.6 888.4,652.6 891.8,654.6 887.0,656.6 890.2,658.6 887.7,660.7 887.7,662.7 888.9,664.7 891.2,666.7 891.8,668.7 886.5,670.7 890.0,672.7 889.0,674.7 886.7,676.7 889.7,678.7 891.2,680.7 887.1,682.7 888.2,684.8 886.7,686.8 890.3,688.8 891.3,690.8 891.6,692.8 888.3,694.8 890.0,696.8 888.3,698.8 888.6,700.8 889.9,702.8 887.5,704.8 886.4,706.8 889.3,708.9 888.0,710.9 888.7,712.9 887.8,714.9 888.6,716.9 887.3,718.9 888.7,720.9 891.2,722.9 888.9,724.9 891.5,726.9 887.0,728.9 887.6,730.9 889.3,733.0 888.2,735.0 888.2,737.0 886.6,739.0 891.8,741.0 890.4,743.0 886.4,745.0 889.6,747.0 888.3,749.0 888.7,751.0 888.6,753.0 888.5,755.0 888.4,757.0 888.3,759.0 888.2,761.0 888.1,763.0 888.0,765.0 885.2,767.0 882.5,769.0 879.8,771.0 877.0,773.0 874.5,775.5 872.0,778.0 862.0,781.5" fill="none" stroke="#30e030" stroke-width="1"/>
<rect x="860" y="774" width="80" height="8" fill="#000" opacity="0"/>
<path d="M935 782 Q937 777 940 776" fill="none" stroke="#30e030" stroke-width="1"/></svg></body></html>
